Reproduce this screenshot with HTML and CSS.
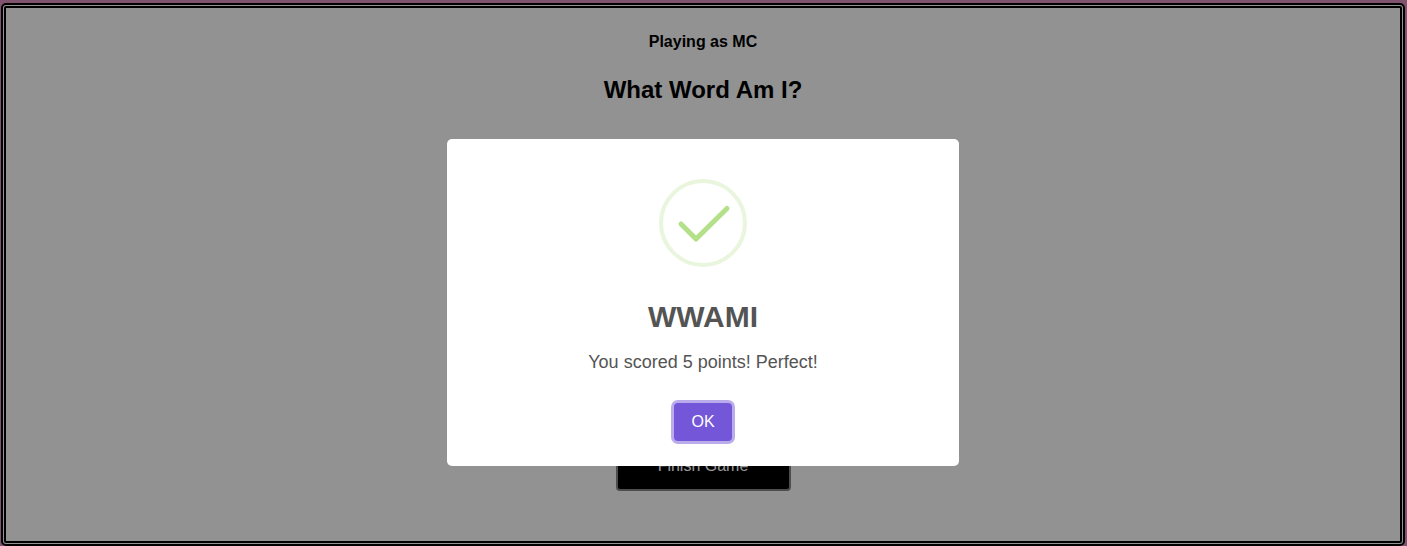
FILE: index.html
```html
<!DOCTYPE html>
<html lang="en">
<head>
<meta charset="utf-8">
<title>What Word Am I?</title>
<link rel="stylesheet" href="styles.css">
</head>
<body>
<main class="game">
  <h4 class="player">Playing as MC</h4>
  <h2 class="heading">What Word Am I?</h2>
  <button class="finish">Finish Game</button>
</main>
<div class="overlay">
  <section class="modal" role="dialog">
    <svg class="icon" width="88" height="88" viewBox="0 0 88 88" fill="none">
      <circle cx="44" cy="44" r="42" stroke="#e9f5dd" stroke-width="4"/>
      <path d="M22 45L37 60L68 29.5" stroke="#b4e08a" stroke-width="5" stroke-linecap="round" stroke-linejoin="round"/>
    </svg>
    <h2 class="title">WWAMI</h2>
    <p class="message">You scored 5 points! Perfect!</p>
    <button class="ok">OK</button>
  </section>
</div>
</body>
</html>
```
FILE: styles.css
```css
* { box-sizing: border-box; }
body {
  margin: 0;
  height: 546px;
  padding: 3px 2px 0 1px;
  overflow: hidden;
  background: #d58bb9;
  font-family: "Liberation Sans", Arial, sans-serif;
}
.game {
  height: 543px;
  border: 5px double #000;
  border-radius: 5px;
  background: #f3f3f3;
  display: flex;
  flex-direction: column;
  align-items: center;
}
.player {
  margin: 25px 0 0;
  font-size: 16px;
  line-height: 18px;
}
.heading {
  margin: 25px 0 0;
  font-size: 24px;
  line-height: 28px;
}
.finish {
  width: 175px;
  height: 51px;
  margin: 336px 0 0;
  border: 2px solid #808080;
  border-radius: 4px;
  background: #000;
  color: #fff;
  font: 16px/18px "Liberation Sans", Arial, sans-serif;
}
.overlay {
  position: fixed;
  inset: 0;
  display: flex;
  justify-content: center;
  align-items: flex-start;
  padding: 139px 1px 0 0;
  background: rgba(0, 0, 0, 0.4);
}
.modal {
  width: 512px;
  height: 327px;
  border-radius: 5px;
  background: #fff;
  color: #545454;
  display: flex;
  flex-direction: column;
  align-items: center;
  padding-top: 40px;
}
.icon { flex: none; }
.title {
  margin: 32px 0 0;
  font-size: 30px;
  line-height: 35px;
}
.message {
  margin: 18px 0 0;
  font-size: 18px;
  line-height: 20px;
}
.ok {
  width: 58px;
  height: 38px;
  margin-top: 31px;
  padding: 0;
  border: 0;
  border-radius: 4px;
  background: #7357d8;
  color: #fff;
  font: 16px/18px "Liberation Sans", Arial, sans-serif;
  box-shadow: 0 0 0 3px #b9abec;
}
```
